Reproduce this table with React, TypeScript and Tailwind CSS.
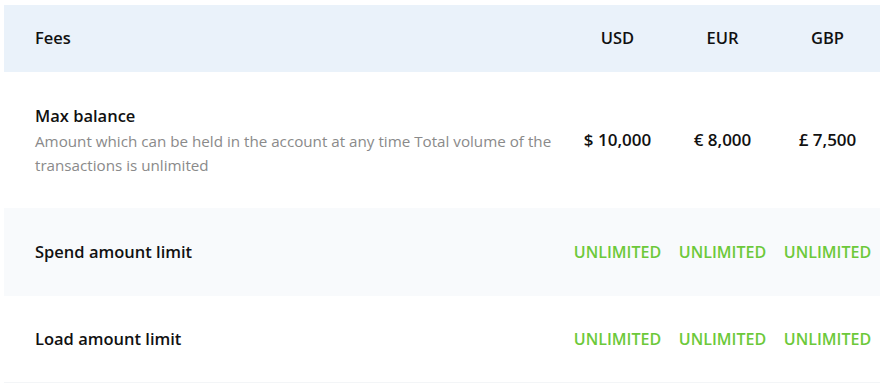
const CURRENCIES = ["USD", "EUR", "GBP"];

const ROWS = [
  {
    title: "Max balance",
    note: "Amount which can be held in the account at any time Total volume of the transactions is unlimited",
    values: ["$ 10,000", "€ 8,000", "£ 7,500"],
    accent: false,
    bg: "bg-white",
    h: "h-[136px]",
  },
  {
    title: "Spend amount limit",
    values: ["UNLIMITED", "UNLIMITED", "UNLIMITED"],
    accent: true,
    bg: "bg-[#f8fafc]",
    h: "h-[88px]",
  },
  {
    title: "Load amount limit",
    values: ["UNLIMITED", "UNLIMITED", "UNLIMITED"],
    accent: true,
    bg: "bg-white",
    h: "h-[86px]",
  },
];

export default function App() {
  return (
    <div className="min-h-[388px] bg-white pt-[5px] pl-[4px] pr-[5px] font-['Open_Sans',sans-serif] text-[#111]">
      <div className="border-b border-[#f3f5f7]">
        {/* Header */}
        <div className="grid h-[67px] grid-cols-[1fr_105px_105px_105px] items-center bg-[#eaf2fa] text-[16.5px] font-semibold">
          <div className="pl-[31px]">Fees</div>
          {CURRENCIES.map((c) => (
            <div key={c} className="text-center">
              {c}
            </div>
          ))}
        </div>

        {ROWS.map((r) => (
          <div
            key={r.title}
            className={`grid grid-cols-[1fr_105px_105px_105px] items-center ${r.bg} ${r.h}`}
          >
            <div className="pl-[31px] pr-1">
              <div className="text-[16.5px] font-semibold leading-6">{r.title}</div>
              {r.note && (
                <p className="mt-[1px] text-[15.2px] leading-6 text-[#8a8a8a]">
                  {r.note}
                </p>
              )}
            </div>
            {r.values.map((v, i) => (
              <div
                key={i}
                className={
                  r.accent
                    ? "text-center text-[16px] font-semibold text-[#6cc93a]"
                    : "text-center text-[17px] font-semibold"
                }
              >
                {v}
              </div>
            ))}
          </div>
        ))}
      </div>
    </div>
  );
}
